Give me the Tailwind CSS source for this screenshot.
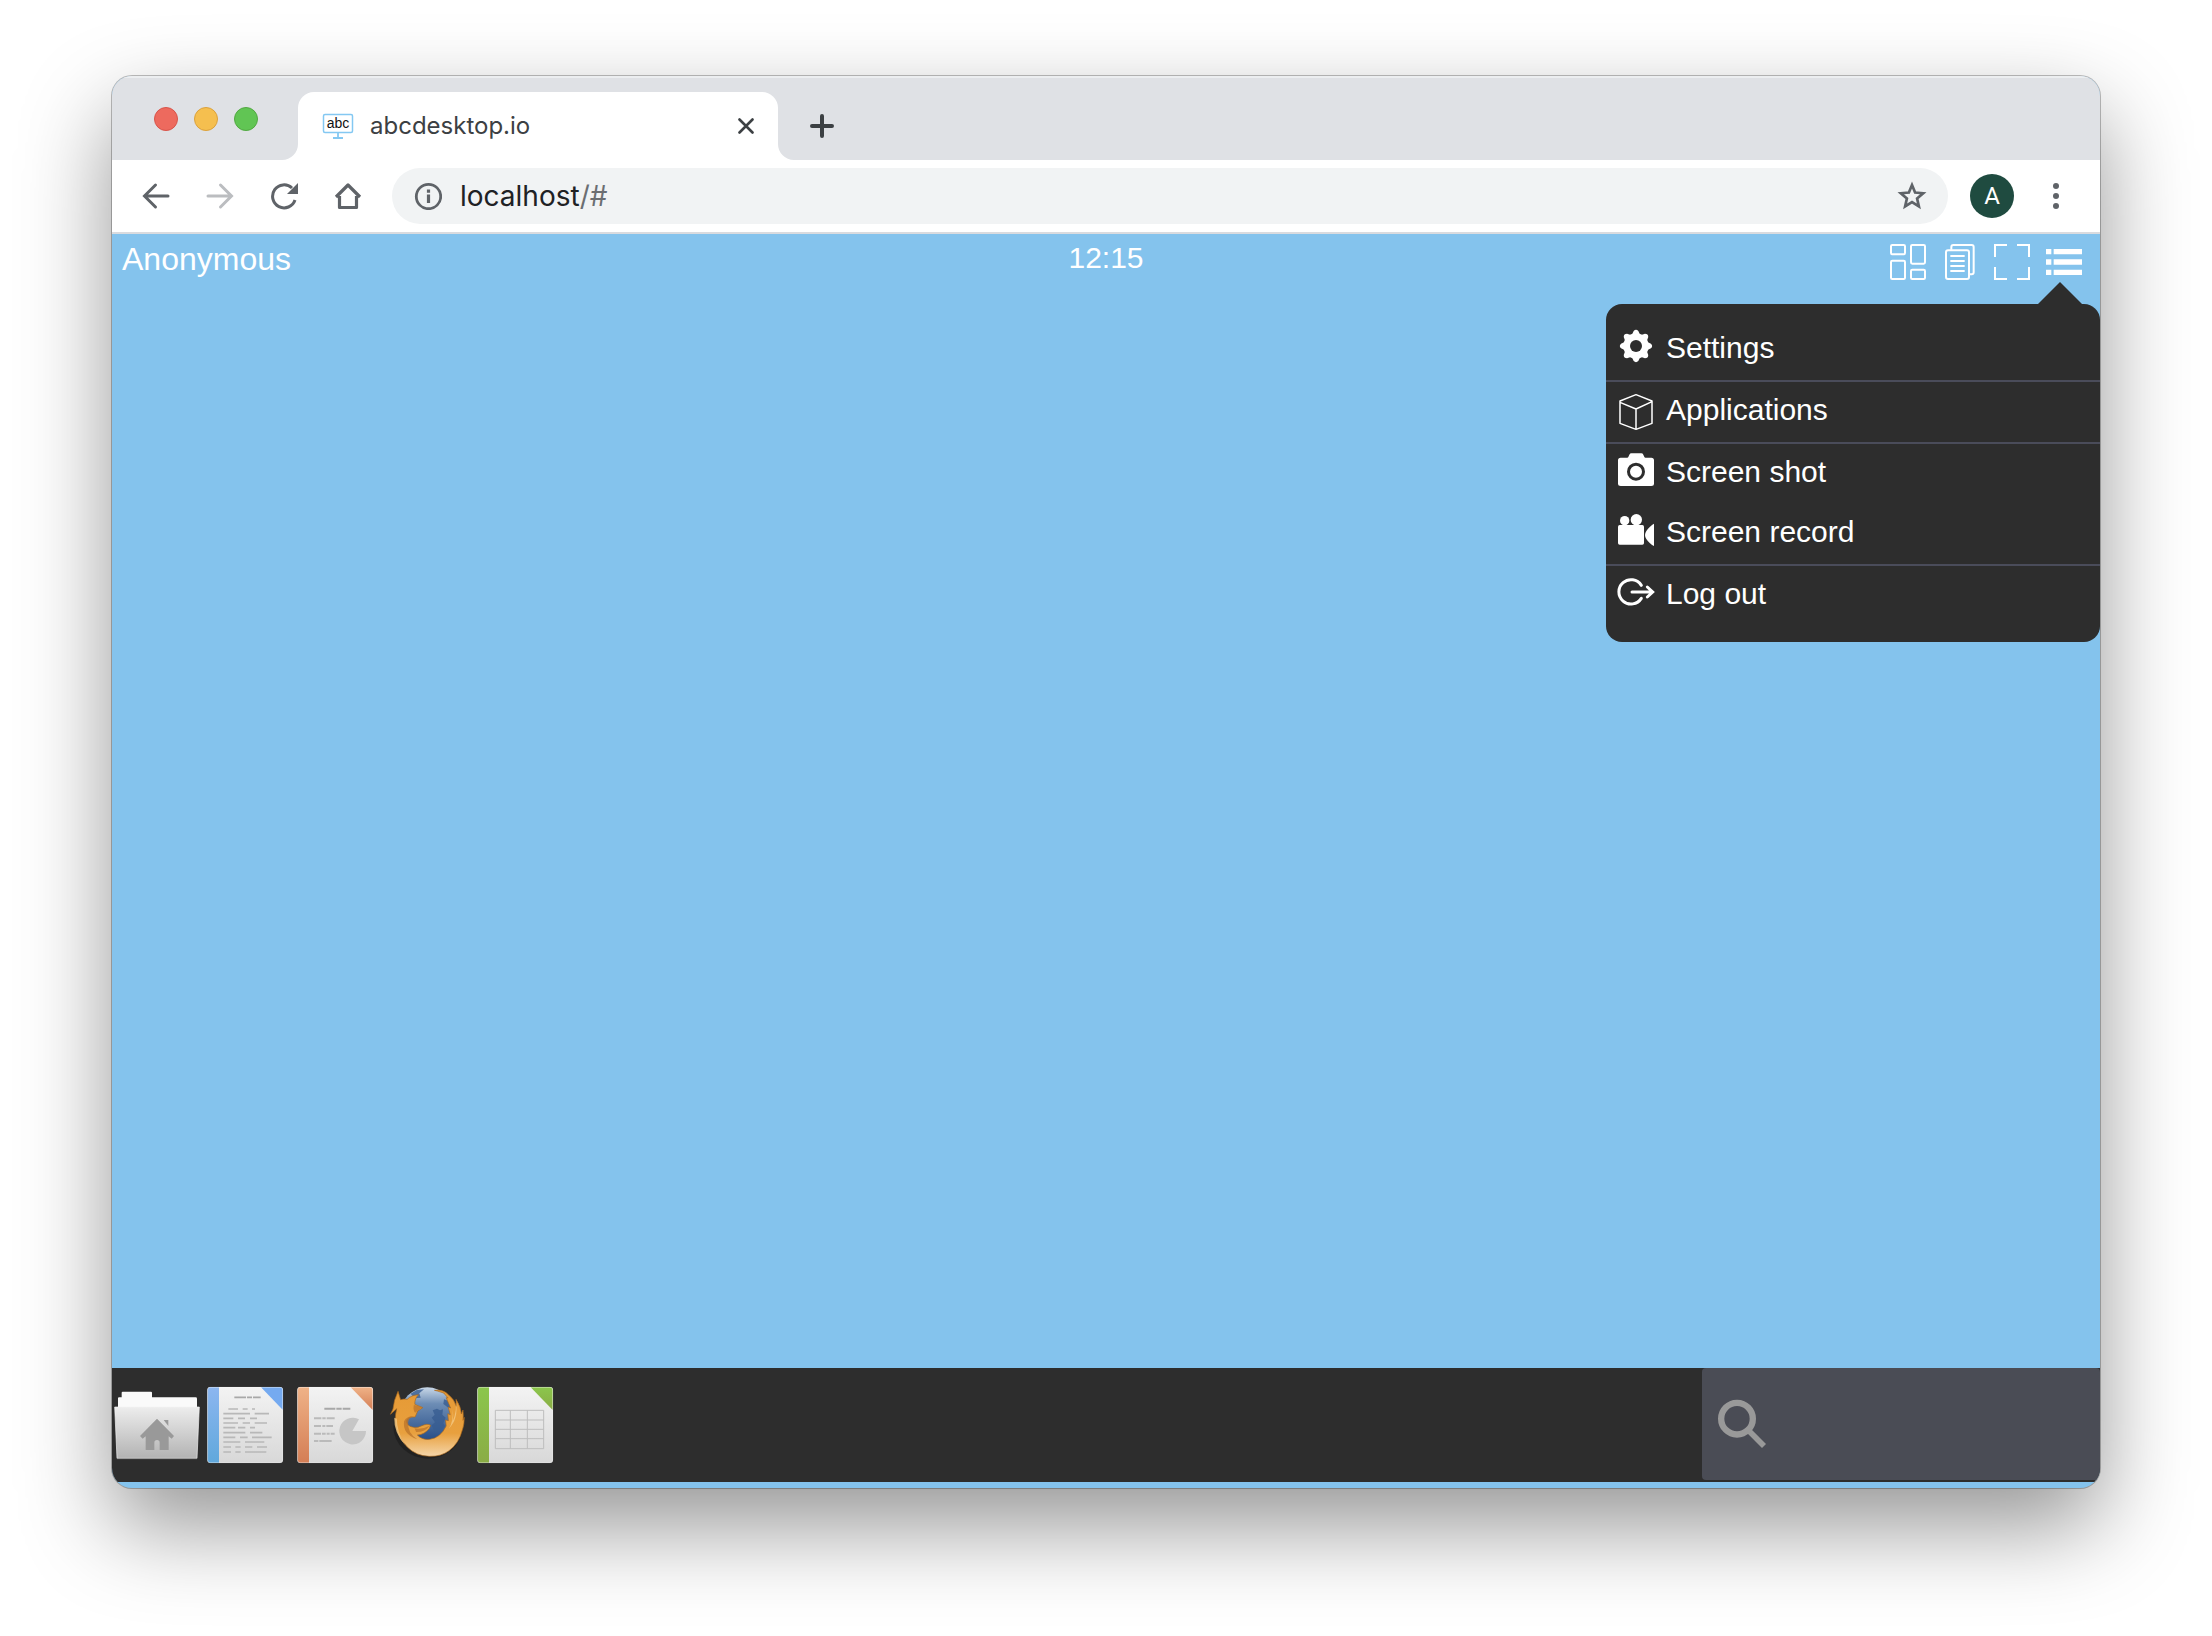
<!DOCTYPE html>
<html lang="en">
<head>
<meta charset="utf-8">
<meta name="viewport" content="width=device-width, initial-scale=1">
<title>abcdesktop.io</title>
<script src="https://cdn.jsdelivr.net/npm/@tailwindcss/browser@4"></script>
</head>
<body class="flex min-h-screen flex-col bg-white px-28 pt-[76px] pb-[148px]">
<div class="flex flex-1 flex-col overflow-hidden rounded-[20px] bg-[#84c3ed] shadow-[0_0_0_1px_rgba(0,0,0,0.25),0_38px_90px_rgba(0,0,0,0.42)]">

  <!-- Tab strip -->
  <header class="flex h-[84px] items-end bg-[#dfe1e5] shadow-[inset_0_2px_0_#eceef0]">
    <div class="flex h-full items-center gap-4 pt-0.5 pr-10 pl-[42px]">
      <button aria-label="Close window" class="size-6 rounded-full border border-[#d8544a] bg-[#ed6a5e]"></button>
      <button aria-label="Minimize window" class="size-6 rounded-full border border-[#dba13c] bg-[#f5bf4f]"></button>
      <button aria-label="Zoom window" class="size-6 rounded-full border border-[#52a842] bg-[#61c554]"></button>
    </div>
    <div class="relative flex h-[68px] w-[480px] items-center rounded-t-2xl bg-white pr-6 pl-6">
      <svg class="absolute bottom-0 -left-4 size-4" viewBox="0 0 16 16" fill="#fff"><path d="M16 0v16H0A16 16 0 0 0 16 0z"/></svg>
      <svg class="absolute -right-4 bottom-0 size-4" viewBox="0 0 16 16" fill="#fff"><path d="M0 0v16h16A16 16 0 0 1 0 0z"/></svg>
      <svg class="mr-4 h-7 w-8" viewBox="0 0 32 28"><rect x="1.500" y="2.500" width="29" height="18" rx="1.500" fill="#fff" stroke="#84c8f2" stroke-width="1.500"/><path d="M16 21v5M11 26h10" stroke="#84c8f2" stroke-width="1.800"/><text x="16" y="16" text-anchor="middle" font-family="Liberation Sans, sans-serif" font-size="14" fill="#111">abc</text></svg>
      <span class="flex-1 font-['Inter',sans-serif] text-2xl text-[#3c4043]">abcdesktop.io</span>
      <button aria-label="Close tab" class="size-4"><svg viewBox="0 0 16 16" class="size-4" stroke="#3c4043" stroke-width="2.600" stroke-linecap="round"><path d="M1.500 1.500l13 13M14.500 1.500l-13 13"/></svg></button>
    </div>
    <button aria-label="New tab" class="mb-[22px] ml-8"><svg viewBox="0 0 24 24" class="size-6" stroke="#3c4043" stroke-width="4" stroke-linecap="round"><path d="M12 2v20M2 12h20"/></svg></button>
  </header>

  <!-- Toolbar -->
  <nav class="flex h-[74px] items-center border-b-2 border-[#d9dbdf] bg-white px-6">
    <div class="mr-6 flex gap-6">
      <button aria-label="Back" class="grid size-10 place-items-center"><svg viewBox="0 0 28 28" class="size-7" fill="none" stroke="#5f6368" stroke-width="3" stroke-linecap="round"><path d="M26 14H3M13.500 3L2.500 14l11 11"/></svg></button>
      <button aria-label="Forward" class="grid size-10 place-items-center"><svg viewBox="0 0 28 28" class="size-7" fill="none" stroke="#bbbdc0" stroke-width="3" stroke-linecap="round"><path d="M2 14h23M14.500 3l11 11-11 11"/></svg></button>
      <button aria-label="Reload" class="grid size-10 place-items-center"><svg viewBox="0 0 28 28" class="size-7" fill="none" stroke="#5f6368" stroke-width="3"><path d="M25 18A11.500 11.500 0 1 1 22 6"/><path d="M28 1v11H17z" fill="#5f6368" stroke="none"/></svg></button>
      <button aria-label="Home" class="grid size-10 place-items-center"><svg viewBox="0 0 28 28" class="size-7" fill="none" stroke="#5f6368" stroke-width="3.200" stroke-linejoin="round"><path d="M2 15L14 3l12 12M5.500 14v11.500h17V14"/></svg></button>
    </div>
    <div class="flex h-14 flex-1 items-center rounded-full bg-[#f1f3f4] pr-[21px] pl-[22px]">
      <svg viewBox="0 0 28 28" class="mr-[18px] size-7" fill="none" stroke="#5f6368" stroke-width="2.800"><circle cx="14.500" cy="14.500" r="12.200"/><path d="M14.500 12.500V21M14.500 7.500v3.200" stroke-width="3.200"/></svg>
      <a href="#" class="flex-1 font-['Inter',sans-serif] text-[28px] text-[#202124]">localhost<span class="text-[#6b6e72]">/#</span></a>
      <button aria-label="Bookmark this page"><svg viewBox="0 0 30 30" class="size-[30px]" fill="none" stroke="#5f6368" stroke-width="2.700"><path d="M15 4l3.100 7.500 8.100.7-6.100 5.300 1.800 7.900-6.900-4.200-6.900 4.200 1.800-7.900-6.100-5.300 8.100-.7z"/></svg></button>
    </div>
    <button aria-label="Profile" class="mx-[22px] grid size-11 place-items-center rounded-full bg-[#1f4b40] font-['Roboto',sans-serif] text-2xl text-white">A</button>
    <button aria-label="Browser menu" class="grid size-10 place-items-center"><svg viewBox="0 0 6 26" class="h-[26px] w-1.5" fill="#5f6368"><circle cx="3" cy="3" r="3"/><circle cx="3" cy="13" r="3"/><circle cx="3" cy="23" r="3"/></svg></button>
  </nav>

  <!-- Desktop -->
  <main class="relative flex flex-1 flex-col pb-1.5 font-['Liberation_Sans',sans-serif] text-white">
    <div class="grid h-[50px] grid-cols-3 items-start pt-2 pr-[18px] pl-2.5">
      <span class="text-[32px] leading-[34px]">Anonymous</span>
      <time class="pl-2 text-center text-[30px] leading-8">12:15</time>
      <div class="flex justify-end gap-4 pt-0.5">
        <button aria-label="Windows"><svg viewBox="90 282 108 108" class="size-9" fill="none" stroke="#fff" stroke-width="6"><rect x="93" y="285" width="42" height="28" rx="4"/><rect x="153" y="285" width="42" height="56" rx="4"/><rect x="93" y="332" width="42" height="55" rx="4"/><rect x="153" y="359" width="42" height="28" rx="4"/></svg></button>
        <button aria-label="Clipboard"><svg viewBox="246 282 108 108" class="size-9" fill="none" stroke="#fff" stroke-width="6"><path d="M274 299v-8q0-6 6-6h55q6 0 6 6v76q0 6-6 6h-8"/><rect x="258" y="301" width="69" height="86" rx="6"/><path d="M271 318h43M271 333h43M271 348h43M271 363h43"/></svg></button>
        <button aria-label="Full screen"><svg viewBox="402 282 108 108" class="size-9" fill="none" stroke="#fff" stroke-width="6"><path d="M405 321v-36H441M471 285h36V321M507 351v36H471M441 387h-36V351"/></svg></button>
        <button aria-label="Main menu"><svg viewBox="558 282 108 108" class="size-9" fill="#fff"><path d="M558 297h16v16h-16zM581 297h85v16h-85zM558 328h16v16h-16zM581 328h85v16h-85zM558 359h16v16h-16zM581 359h85v16h-85z"/></svg></button>
      </div>
    </div>

    <!-- Main menu popup -->
    <div class="absolute top-[70px] right-0 w-[494px] rounded-2xl bg-[#2d2d2d] py-4">
      <svg class="absolute -top-[22px] right-[18px] h-[22px] w-11" viewBox="0 0 44 22" fill="#2d2d2d"><path d="M22 0l22 22H0z"/></svg>
      <ul class="text-[30px] leading-9">
        <li class="border-b-2 border-[#4a4c5a]"><button class="flex h-[60px] w-full items-center gap-3 px-3 pb-1">
          <svg viewBox="84 120 108 108" class="size-9 overflow-visible"><g fill="#fff"><circle cx="138" cy="168" r="38"/><g id="tooth-pair"><path d="M123 140l8-17q7-7 14 0l8 17zM123 196l8 17q7 7 14 0l8-17z"/></g><use href="#tooth-pair" transform="rotate(45 138 168)"/><use href="#tooth-pair" transform="rotate(90 138 168)"/><use href="#tooth-pair" transform="rotate(135 138 168)"/></g><circle cx="138" cy="168" r="18" fill="#2d2d2d"/></svg>
          Settings</button></li>
        <li class="border-b-2 border-[#4a4c5a]"><button class="flex h-[60px] w-full items-center gap-3 px-3 pb-1">
          <svg viewBox="84 306 108 108" class="size-9 overflow-visible" fill="none" stroke="#fff" stroke-width="4.500" stroke-linejoin="round"><path d="M138 314l48 19v67l-48 18-48-18v-67zM90 337l48 20 48-22M138 357v61"/></svg>
          Applications</button></li>
        <li><button class="flex h-[60px] w-full items-center gap-3 px-3 pb-1">
          <svg viewBox="84 -18 108 108" class="size-9 overflow-visible"><path fill="#fff" d="M92-7h20q3 0 4-4l2-5q2-4 6-4h30q4 0 6 4l2 5q1 4 4 4h18q8 0 8 8v71q0 6-8 6H92q-8 0-8-6V1q0-8 8-8z"/><circle cx="138" cy="35" r="22.500" fill="#fff" stroke="#2d2d2d" stroke-width="9"/></svg>
          Screen shot</button></li>
        <li class="border-b-2 border-[#4a4c5a]"><button class="flex h-[60px] w-full items-center gap-3 px-3 pb-1">
          <svg viewBox="84 162 108 108" class="size-9 overflow-visible" fill="#fff"><circle cx="104" cy="182" r="14"/><circle cx="139" cy="179" r="17"/><rect x="84" y="195" width="78" height="59" rx="5"/><path d="M192 191v67q-4 0-12-8-15-14-15-25t15-25q8-8 12-9z"/></svg>
          Screen record</button></li>
        <li><button class="flex h-[60px] w-full items-center gap-3 px-3 pb-1">
          <svg viewBox="84 348 108 108" class="size-9 overflow-visible" fill="none" stroke="#fff" stroke-width="9" stroke-linecap="round"><path d="M154 376a36.500 36.500 0 1 0 0 39M126 396h61M172 381l16 15-16 15"/></svg>
          Log out</button></li>
      </ul>
    </div>

    <!-- Dock -->
    <footer class="mt-auto flex h-[114px] items-start bg-[#2d2d2d]">
      <div class="flex flex-1 pt-3">
        <button aria-label="Home folder"><svg viewBox="36 90 270 270" class="size-[90px]">
          <defs><linearGradient id="folder" x2="0" y2="1"><stop stop-color="#ededed"/><stop offset="1" stop-color="#b3b3b3"/></linearGradient></defs>
          <path d="M54 185v-40q0-3 3-3h8v-14q0-3 3-3h85q3 0 3 3v14h131q4 0 4 4v39z" fill="#fafafa"/>
          <path d="M44 171h254l-7 154H51z" fill="url(#folder)" stroke="#f4f4f4" stroke-width="2"/><path d="M51 326h240" stroke="#8f8f8f" stroke-width="2"/>
          <path d="M171 206l51 52-7 8-9-7v41h-27v-22q0-8-8-8t-8 8v22h-26v-41l-9 7-8-8z" fill="#999"/><path d="M191 210h14v18z" fill="#999"/>
        </svg></button>
        <button aria-label="Writer"><svg viewBox="306 90 270 270" class="size-[90px]">
          <defs><linearGradient id="page" x2="0" y2="1"><stop stop-color="#f3f3f3"/><stop offset="1" stop-color="#d8d8d8"/></linearGradient><linearGradient id="blue" x2="0" y2="1"><stop stop-color="#8cb6f0"/><stop offset="1" stop-color="#60a8dc"/></linearGradient></defs>
          <rect x="322" y="111" width="227" height="228" rx="9" fill="url(#page)"/><path d="M357 112h-27q-7 0-7 7v212q0 7 7 7h27z" fill="url(#blue)"/><path d="M483 112h57q8 0 8 8v59z" fill="#75aaf0"/>
          <path d="M403 142h35M441 142h15M459 142h23" stroke="#a8a8a8" stroke-width="5"/>
          <path d="M385 177h29M428 177h15M456 177h9M370 191h80M464 191h43M370 205h30M414 205h21M450 205h21M370 219h44M428 219h22M464 219h37M370 233h36M414 233h22M450 233h15M370 248h66M450 248h37M370 262h36M420 262h23M456 262h59M370 276h51M435 276h58M370 291h23M406 291h16M435 291h22M471 291h30M370 306h23M406 306h16M435 306h64" stroke="#b8b8b8" stroke-width="5"/>
          <rect x="323" y="112" width="225" height="226" rx="8" fill="none" stroke="#fff" stroke-opacity=".35" stroke-width="2"/>
        </svg></button>
        <button aria-label="Impress"><svg viewBox="6 90 270 270" class="size-[90px]">
          <defs><linearGradient id="orange" x2="0" y2="1"><stop stop-color="#efb287"/><stop offset="1" stop-color="#d47e55"/></linearGradient></defs>
          <rect x="22" y="111" width="227" height="228" rx="9" fill="url(#page)"/><path d="M57 112H30q-7 0-7 7v212q0 7 7 7h27z" fill="url(#orange)"/><path d="M182 112h58q8 0 8 8v60z" fill="url(#orange)"/>
          <path d="M103 176h33M139 176h16M158 176h23" stroke="#a8a8a8" stroke-width="6"/>
          <path d="M72 205h22M97 205h10M110 205h24M72 228h21M97 228h9M109 228h20M72 251h21M96 251h11M110 251h9M122 251h12M72 273h13M88 273h37" stroke="#bababa" stroke-width="6"/>
          <path d="M187 243l20-35A40 40 0 1 0 228 243z" fill="#c6c6c6"/>
          <rect x="23" y="112" width="225" height="226" rx="8" fill="none" stroke="#fff" stroke-opacity=".35" stroke-width="2"/>
        </svg></button>
        <button aria-label="Firefox"><svg viewBox="6 60 270 270" class="size-[90px]">
          <defs><linearGradient id="globe" x2="0" y2="1"><stop stop-color="#c9d8e8"/><stop offset=".3" stop-color="#6d8db5"/><stop offset="1" stop-color="#234a85"/></linearGradient><linearGradient id="fox" x2="0" y2="1"><stop stop-color="#e69a35"/><stop offset=".65" stop-color="#e8a03e"/><stop offset="1" stop-color="#f5d6aa"/></linearGradient></defs>
          <ellipse cx="144" cy="200" rx="104" ry="96" fill="#000" opacity=".25"/>
          <circle cx="142" cy="164" r="82" fill="url(#globe)"/>
          <path d="M158 151l13-5 9 5 9-3-2 16 10 9-7 17 5 9-17 16-16-2-7-17 10-9-10-14 9-9zM192 118l19 7 10 22-15-3-16-12zM92 101l18-11 22-2-14 12 4 13-18 2z" fill="#375c91" opacity=".8"/>
          <g transform="scale(.950 1)">
            <path d="M33 163l8-16 5-26 11-27 8 25q10-3 21-1 13-13 36-14-13 11-12 29l25 10-16 10-8 18q-22-2-27 11-1 16 22 20 13 2 24-4 20-9 30-2l-4 9q-15 19-38 20 14 15 39 13 34-4 52-40l-2-18 9 2-2-21 8 3-7-23 8 3-14-31 6 1-14-15-20-6-9-2q28-4 45 14 18 13 24 34l-1-21q16 23 17 44l5-12q2 22 0 31l4-9q0 22-5 35-11 43-43 65-25 18-62 17-42-1-70-28-35-34-38-82 0-16 5-33z" fill="url(#fox)" stroke="#a8671d" stroke-width="2"/>
            <path d="M76 184q-6 39 42 54-32-18-29-51 2-14 15-18-20 0-28 15zM107 135l27 6-23 17q-8-8-4-23zM109 205q24 4 48-8-16 20-43 19z" fill="#bb742b" opacity=".75"/>
            <path d="M45 173q-2 45 35 83-27-40-27-80zM240 127q2 46-23 79 31-28 23-79zM229 147q4 38-12 59 20-19 12-59z" fill="#f4c984" opacity=".8"/>
          </g>
        </svg></button>
        <button aria-label="Calc"><svg viewBox="276 60 270 270" class="size-[90px]">
          <defs><linearGradient id="green" x2="0" y2="1"><stop stop-color="#8bc64c"/><stop offset="1" stop-color="#8aac45"/></linearGradient></defs>
          <rect x="292" y="81" width="227" height="228" rx="9" fill="url(#page)"/><path d="M327 82h-27q-7 0-7 7v212q0 7 7 7h27z" fill="url(#green)"/><path d="M452 82h58q8 0 8 8v60z" fill="url(#green)"/>
          <path d="M346 151h145v115H346zM391 151v115M442 151v115M346 180h145M346 208h145M346 236h145" fill="none" stroke="#bdbdbd" stroke-width="3"/>
          <rect x="293" y="82" width="225" height="226" rx="8" fill="none" stroke="#fff" stroke-opacity=".35" stroke-width="2"/>
        </svg></button>
      </div>
      <label class="flex h-28 w-1/5 items-center rounded bg-[#4a4c55] pr-4 pl-[15px]">
        <svg viewBox="111 147 150 150" class="size-[50px] shrink-0" fill="none" stroke="#999"><circle cx="171" cy="206" r="47.500" stroke-width="19"/><path d="M205 241l47 47" stroke-width="17"/></svg>
        <input type="search" aria-label="Search applications" class="ml-3 min-w-0 flex-1 bg-transparent text-[30px] outline-none">
      </label>
    </footer>
  </main>
</div>
</body>
</html>
